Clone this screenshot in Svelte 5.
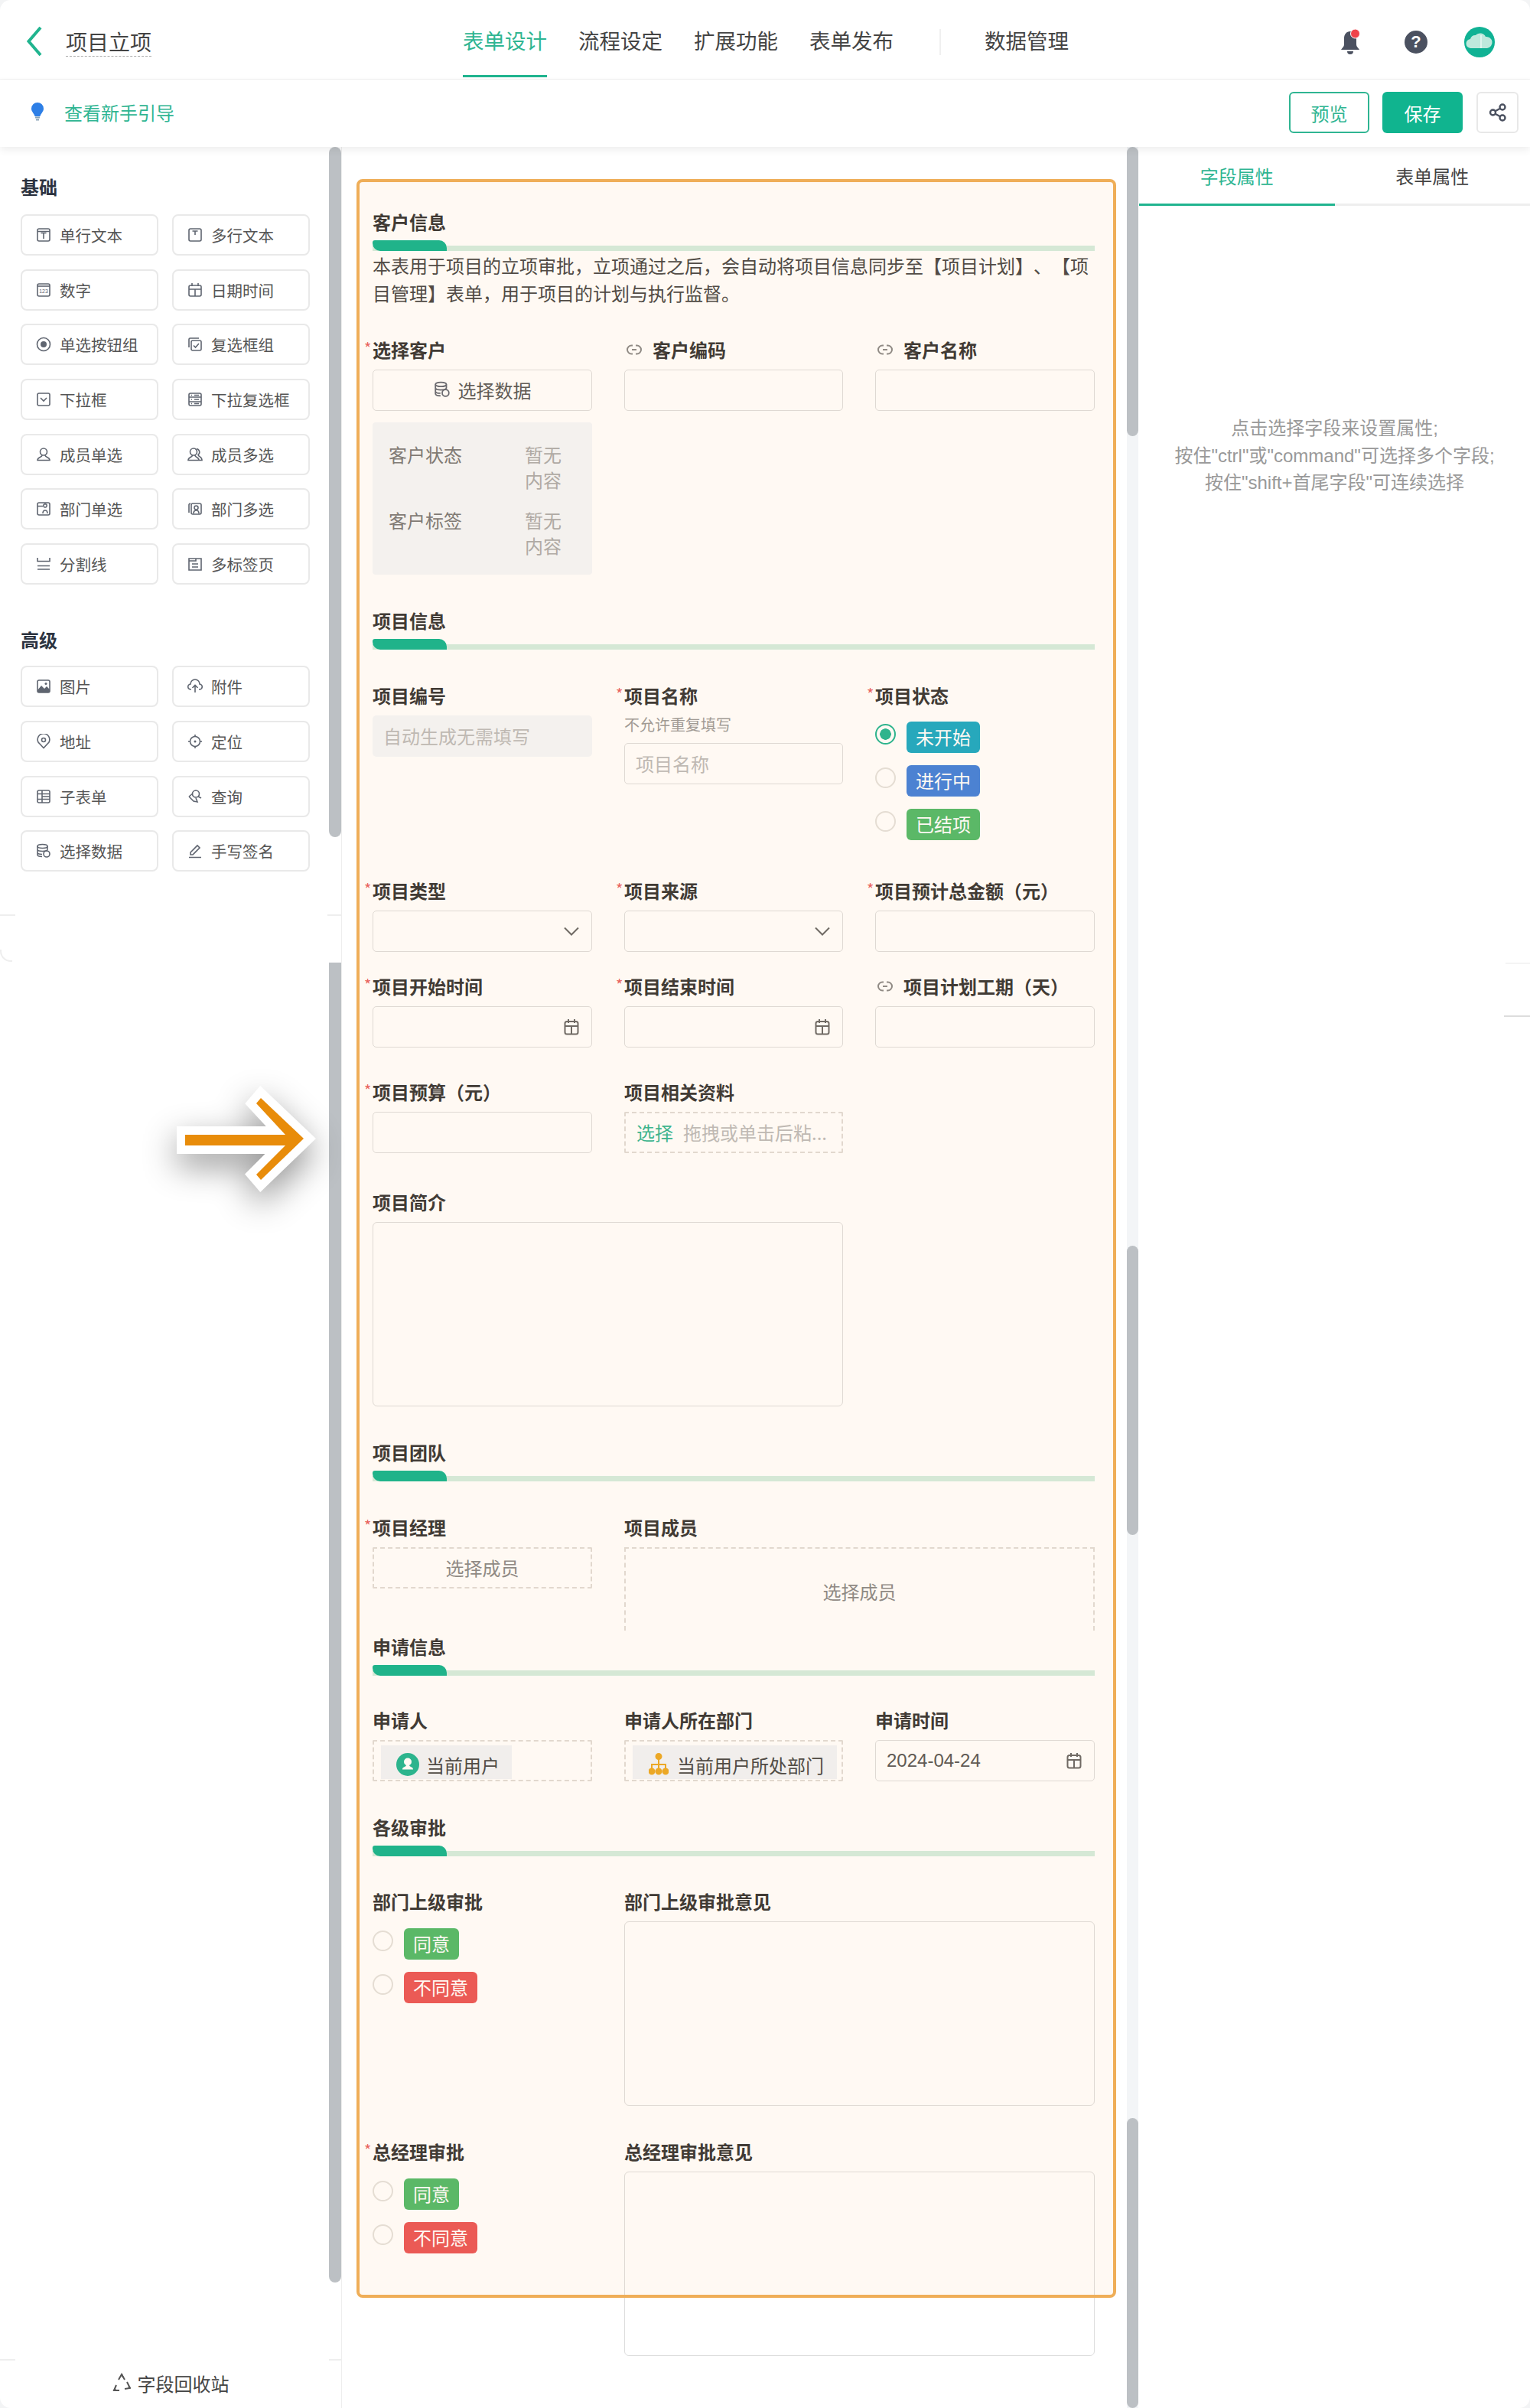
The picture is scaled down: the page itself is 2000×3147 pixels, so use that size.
<script lang="ts">
  // Form designer page: header, widget palette, form canvas, property panel.
  const box = '<rect x="2" y="2" width="16" height="16" rx="2"/>';
  const icons: Record<string, string> = {
    single: box + '<path d="M2 5.500h16M6.500 7.500h7M10 7.500V15"/>',
    multi: box + '<path d="M6.500 5h7M10 5v5"/>',
    number: box + '<path d="M2 5h16"/><text x="10" y="14" font-size="7" font-family="Liberation Sans" text-anchor="middle" fill="#5f6570" stroke="none">123</text>',
    date: '<path d="M6 1v4M14 1v4"/><rect x="2" y="4" width="16" height="14" rx="2"/><path d="M2 9h16M10 9v9"/>',
    radio: '<circle cx="10" cy="10" r="8.500"/><circle cx="10" cy="10" r="4" fill="#5f6570" stroke="none"/>',
    check: '<path d="M2 14V3.500A1.500 1.500 0 0 1 3.500 2H15"/><rect x="5" y="5" width="13" height="13" rx="2"/><path d="M8 11.500l2.500 2.500 4.500-5"/>',
    select: box + '<path d="M6 8l4 4 4-4"/>',
    multiselect: box + '<path d="M2 7h16M2 13h16M9 4.500h6M9 10h6M9 15.500h6M5 4.500h1M5 10h1M5 15.500h1"/>',
    user: '<circle cx="10" cy="6.500" r="4.500"/><path d="M8 11c0 3-6 2-6 6.500h16c0-4.500-6-3.500-6-6.500"/>',
    users: '<circle cx="8" cy="6.500" r="4.500"/><path d="M6.500 11c0 3-5.500 2-5.500 6.500h14c0-4.500-5-3.500-5-6.500M12 2.500a4.500 4.500 0 0 1 2 8c1 3 5 2 5 7h-4"/>',
    dept: box + '<path d="M2 6.500h7M12 8a2.200 2.200 0 1 1 .01 0M9 16c0-3 1-4 3-4s3 1 3 4"/>',
    deptm: '<path d="M2 15V4.500A2 2 0 0 1 4 3"/><rect x="5" y="3" width="13" height="14" rx="2"/><circle cx="11.500" cy="8.500" r="2.500"/><path d="M8 16c0-3 1.500-4 3.500-4s3.500 1 3.500 4"/>',
    divider: '<path d="M2 2v4.500h16V2M2 12.500h16M2 17h16"/>',
    tabs: '<path d="M2 3h16v15H2zM2 6h9V3M6 10h8M6 14h8"/>',
    image: box + '<path d="M2 15l5-6 4 4 3-3 4 4v4H2z" fill="#5f6570" stroke="none"/><circle cx="13" cy="6.500" r="1.500" fill="#5f6570" stroke="none"/>',
    attach: '<path d="M5 14H4.500a3.500 3.500 0 0 1-.5-7 6 6 0 0 1 12 0 3.500 3.500 0 0 1-.5 7H15M10 18V9M6.500 12L10 8.500l3.500 3.500"/>',
    addr: '<path d="M10 18.500L3 11a7.800 7.800 0 1 1 14 0z"/><circle cx="10" cy="8" r="2.500"/>',
    locate: '<circle cx="10" cy="10" r="6.500"/><circle cx="10" cy="10" r="1.500" fill="#5f6570" stroke="none"/><path d="M10 1v2.500M10 16.500V19M1 10h2.500M16.500 10H19"/>',
    subform: box + '<path d="M8 2v16M8 6.500h10M8 10h10M8 13.500h10M2 6.500h6M2 13.500h6"/>',
    query: '<circle cx="11" cy="6.500" r="4.500"/><path d="M2 10l5-4M2 10l6 6 5 1-2-5M14 10l4 2"/>',
    data: '<ellipse cx="8.500" cy="4" rx="6.500" ry="2.500"/><path d="M2 4v11c0 1.500 2.500 2.500 6 2.500M2 8c0 1.500 3 2.500 6.500 2.500s6.500-1 6.500-2.500V4M2 12c0 1.500 2.500 2.500 6 2.500"/><circle cx="14" cy="14" r="4"/>',
    sign: '<path d="M4 12L13 3l3 3-9 9H4zM2 18.500h16"/>',
  };

  const basic = [
    ['single', '单行文本'], ['multi', '多行文本'], ['number', '数字'], ['date', '日期时间'],
    ['radio', '单选按钮组'], ['check', '复选框组'], ['select', '下拉框'], ['multiselect', '下拉复选框'],
    ['user', '成员单选'], ['users', '成员多选'], ['dept', '部门单选'], ['deptm', '部门多选'],
    ['divider', '分割线'], ['tabs', '多标签页'],
  ];
  const advanced = [
    ['image', '图片'], ['attach', '附件'], ['addr', '地址'], ['locate', '定位'],
    ['subform', '子表单'], ['query', '查询'], ['data', '选择数据'], ['sign', '手写签名'],
  ];
  const navs = ['表单设计', '流程设定', '扩展功能', '表单发布'];
</script>

{#snippet widget(item: string[])}
  <div class="widget">
    <svg class="wicon" viewBox="0 0 20 20" width="20" height="20">{@html icons[item[0]]}</svg>
    <span>{item[1]}</span>
  </div>
{/snippet}

{#snippet heading(text: string)}
  <div class="sec-title">{text}</div>
  <div class="sec-bar"><i></i></div>
{/snippet}

{#snippet label(text: string, req = false, link = false)}
  <div class="label">
    {#if req}<span class="req">*</span>{/if}
    {#if link}
      <svg class="link" viewBox="0 0 22 20" width="22" height="20" fill="none" stroke="#888" stroke-width="2">
        <path d="M9 4.500H7.500a5.500 5.500 0 0 0 0 11H9M13 4.500h1.500a5.500 5.500 0 0 1 0 11H13M8 10h6" />
      </svg>
    {/if}
    {text}
  </div>
{/snippet}

{#snippet calendar()}
  <svg class="cal" viewBox="0 0 20 22" width="20" height="22" fill="none" stroke="#666" stroke-width="2">
    <path d="M6 1v5M14 1v5" /><rect x="1.500" y="4" width="17" height="16.500" rx="2.500" /><path d="M1.500 10h17M10 10v10.500" />
  </svg>
{/snippet}

{#snippet chevron()}
  <svg viewBox="0 0 20 12" width="20" height="12" fill="none" stroke="#666" stroke-width="2"><path d="M1 1.500l9 9 9-9" /></svg>
{/snippet}

{#snippet option(text: string, color: string, on = false)}
  <div class="opt">
    <span class="radio" class:on></span>
    <span class="tag {color}">{text}</span>
  </div>
{/snippet}

<div class="app">
  <header class="top">
    <div class="brand">
      <svg viewBox="0 0 22 40" width="22" height="40" fill="none" stroke="#20b48f" stroke-width="4"><path d="M19 2L3.500 20 19 38" /></svg>
      <span class="name">项目立项</span>
    </div>
    <nav class="nav">
      {#each navs as n, i}
        <div class="nav-item" class:active={i === 0}>{n}</div>
      {/each}
      <span class="nav-div"></span>
      <div class="nav-item">数据管理</div>
    </nav>
    <div class="tools">
      <svg class="bell" viewBox="0 0 28 34" width="28" height="34">
        <path d="M14 3c-5 0-8 4-8 9v8c0 3-2 4-4 7h24c-2-3-4-4-4-7v-8c0-5-3-9-8-9zM10 29a4 4 0 0 0 8 0z" fill="#4b5160" />
        <circle cx="20.500" cy="6" r="6" fill="#f0434a" stroke="#fff" stroke-width="1" />
      </svg>
      <div class="help">?</div>
      <svg class="avatar" viewBox="0 0 40 40" width="40" height="40">
        <circle cx="20" cy="20" r="20" fill="#10b294" />
        <path d="M9 28a6 6 0 0 1-1-12 7 7 0 0 1 7-5 8 8 0 0 1 13 2 7.500 7.500 0 0 1 2 15z" fill="#bfe9dc" />
        <path d="M22 11v17" stroke="#dff5ee" stroke-width="2" />
      </svg>
    </div>
  </header>

  <div class="sub">
    <div class="guide">
      <svg viewBox="0 0 18 24" width="18" height="24">
        <path d="M9 0a8 8 0 0 1 8 8c0 4-3.500 6-4.500 10h-7C4.500 14 1 12 1 8a8 8 0 0 1 8-8z" fill="#2e7fe6" />
        <path d="M6 19.500h6M7 22.500h4" stroke="#8aa4b8" stroke-width="2" />
      </svg>
      <span>查看新手引导</span>
    </div>
    <div class="actions">
      <button class="btn ghost">预览</button>
      <button class="btn solid">保存</button>
      <button class="btn share" aria-label="分享">
        <svg viewBox="0 0 24 24" width="24" height="24" fill="none" stroke="#4b5160" stroke-width="2.400">
          <circle cx="5.500" cy="12" r="3.500" /><circle cx="18" cy="5" r="3.500" /><circle cx="18" cy="19" r="3.500" />
          <path d="M8.500 10.300l6.500-3.600M8.500 13.700l6.500 3.600" />
        </svg>
      </button>
    </div>
  </div>

  <main class="main">
    <aside class="palette">
      <i class="thumb-l first"></i>
      <i class="thumb-l second"></i>
      <h3 class="group first">基础</h3>
      <div class="widgets">
        {#each basic as item}{@render widget(item)}{/each}
      </div>
      <h3 class="group">高级</h3>
      <div class="widgets">
        {#each advanced as item}{@render widget(item)}{/each}
      </div>
      <div class="recycle">
        <svg viewBox="0 0 24 28" width="24" height="28" fill="none" stroke="#555" stroke-width="2">
          <path d="M8 10l4-7 4 7M19 13l4 8-7 1M9 24H2l3-7" />
          <path d="M14 7l-2-4M21 19l2 2M4 22l-2 2" />
        </svg>
        <span>字段回收站</span>
      </div>
    </aside>

    <section class="canvas">
      <div class="track"><i class="t1"></i><i class="t2"></i><i class="t3"></i></div>

      <div class="sec first">
        {@render heading('客户信息')}
        <p class="desc">本表用于项目的立项审批，立项通过之后，会自动将项目信息同步至【项目计划】、【项目管理】表单，用于项目的计划与执行监督。</p>
      </div>
      <div class="row r39">
        <div>
          {@render label('选择客户', true)}
          <div class="input pick">
            <svg class="wicon" viewBox="0 0 20 20" width="22" height="22">{@html icons.data}</svg>
            <span>选择数据</span>
          </div>
          <div class="info">
            <span>客户状态</span><em>暂无内容</em>
            <span>客户标签</span><em>暂无内容</em>
          </div>
        </div>
        <div>{@render label('客户编码', false, true)}<div class="input"></div></div>
        <div>{@render label('客户名称', false, true)}<div class="input"></div></div>
      </div>

      <div class="sec">{@render heading('项目信息')}</div>
      <div class="row r44">
        <div>
          {@render label('项目编号')}
          <div class="input auto">自动生成无需填写</div>
        </div>
        <div>
          {@render label('项目名称', true)}
          <div class="hint">不允许重复填写</div>
          <div class="input ph">项目名称</div>
        </div>
        <div>
          {@render label('项目状态', true)}
          <div class="opts status">
            {@render option('未开始', 'cyan', true)}
            {@render option('进行中', 'blue')}
            {@render option('已结项', 'green')}
          </div>
        </div>
      </div>

      <div class="row r50">
        <div>{@render label('项目类型', true)}<div class="input end">{@render chevron()}</div></div>
        <div>{@render label('项目来源', true)}<div class="input end">{@render chevron()}</div></div>
        <div>{@render label('项目预计总金额（元）', true)}<div class="input"></div></div>
      </div>

      <div class="row r29">
        <div>{@render label('项目开始时间', true)}<div class="input end">{@render calendar()}</div></div>
        <div>{@render label('项目结束时间', true)}<div class="input end">{@render calendar()}</div></div>
        <div>{@render label('项目计划工期（天）', false, true)}<div class="input"></div></div>
      </div>

      <div class="row r42">
        <div>{@render label('项目预算（元）', true)}<div class="input"></div></div>
        <div>
          {@render label('项目相关资料')}
          <div class="input dashed upload"><b>选择</b><span>拖拽或单击后粘...</span></div>
        </div>
      </div>

      <div class="row r48">
        <div class="span2">{@render label('项目简介')}<div class="area"></div></div>
      </div>

      <div class="sec">{@render heading('项目团队')}</div>
      <div class="row r44">
        <div>{@render label('项目经理', true)}<div class="input dashed center">选择成员</div></div>
        <div class="span2">{@render label('项目成员')}<div class="members">选择成员</div></div>
      </div>

      <div class="sec tight">{@render heading('申请信息')}</div>
      <div class="row r42">
        <div>
          {@render label('申请人')}
          <div class="input dashed holder">
            <div class="chip user">
              <svg viewBox="0 0 30 30" width="30" height="30">
                <circle cx="15" cy="15" r="15" fill="#1cb592" />
                <circle cx="15" cy="11.500" r="5" fill="#fff" />
                <path d="M13 15.500c0 3-5 2-5 6h14c0-4-5-3-5-6z" fill="#fff" />
              </svg>
              <span>当前用户</span>
            </div>
          </div>
        </div>
        <div>
          {@render label('申请人所在部门')}
          <div class="input dashed holder">
            <div class="chip org">
              <svg viewBox="0 0 26 30" width="26" height="30" fill="none" stroke="#eba823" stroke-width="2">
                <circle cx="13" cy="4.500" r="3.500" fill="#eba823" />
                <path d="M13 7v13M4 21v-6h18v6" />
                <circle cx="4" cy="24" r="3.500" fill="#eba823" /><circle cx="13" cy="24" r="3.500" fill="#eba823" /><circle cx="22" cy="24" r="3.500" fill="#eba823" />
              </svg>
              <span>当前用户所处部门</span>
            </div>
          </div>
        </div>
        <div>
          {@render label('申请时间')}
          <div class="input end between"><span class="date">2024-04-24</span>{@render calendar()}</div>
        </div>
      </div>

      <div class="sec">{@render heading('各级审批')}</div>
      <div class="row r43">
        <div>
          {@render label('部门上级审批')}
          <div class="opts approve">
            {@render option('同意', 'green')}
            {@render option('不同意', 'red')}
          </div>
        </div>
        <div class="span2">{@render label('部门上级审批意见')}<div class="area"></div></div>
      </div>

      <div class="row r44">
        <div>
          {@render label('总经理审批', true)}
          <div class="opts approve">
            {@render option('同意', 'green')}
            {@render option('不同意', 'red')}
          </div>
        </div>
        <div class="span2">{@render label('总经理审批意见')}<div class="area"></div></div>
      </div>
    </section>

    <aside class="props">
      <div class="prop-tabs">
        <div class="prop-tab active">字段属性</div>
        <div class="prop-tab">表单属性</div>
      </div>
      <p class="prop-tip">点击选择字段来设置属性;<br />按住"ctrl"或"command"可选择多个字段;<br />按住"shift+首尾字段"可连续选择</p>
    </aside>
  </main>

  <!-- highlight frame over the form -->
  <div class="frame"></div>

  <!-- callout arrow -->
  <svg class="arrow" viewBox="200 1400 230 210" width="230" height="210">
    <path class="arrow-edge" d="M242 1483H373L335 1442L341 1435L397 1488L341 1542L335 1535L373 1497H242Z" />
    <path fill="#e88c0a" d="M242 1483H373L335 1442L341 1435L397 1488L341 1542L335 1535L373 1497H242Z" />
  </svg>

  <!-- capture seams left by the stitched long screenshot -->
  <i class="seam a"></i><i class="seam b"></i><i class="seam c"></i><i class="seam d"></i>
  <i class="seam e"></i><i class="seam f"></i><i class="seam g"></i>
</div>

<style>
  :global(body) {
    margin: 0;
    background: #f3f4f5;
  }
  * {
    box-sizing: border-box;
  }
  .app {
    position: relative;
    width: 2000px;
    height: 3147px;
    overflow: hidden;
    background: #fff;
    border-radius: 14px;
    font-family: 'Noto Sans CJK SC', 'Liberation Sans', sans-serif;
    font-size: 24px;
    color: #444;
  }

  /* header */
  .top {
    display: flex;
    height: 104px;
    border-bottom: 1px solid #f1f1f1;
  }
  .brand {
    display: flex;
    align-items: center;
    gap: 30px;
    width: 605px;
    padding: 4px 0 0 34px;
  }
  .name {
    font-size: 28px;
    line-height: 38px;
    border-bottom: 1px dashed #aaa;
    margin-top: 2px;
    color: #444;
  }
  .nav {
    display: flex;
    gap: 41px;
  }
  .nav-item {
    height: 101px;
    padding-top: 8px;
    line-height: 88px;
    font-size: 27.5px;
    color: #444;
    border-bottom: 3px solid transparent;
  }
  .nav-item.active {
    color: #2fb592;
    border-bottom-color: #20b48f;
  }
  .nav-div {
    width: 2px;
    height: 34px;
    margin: 38px 16px 0 19px;
    background: #f0f0f0;
  }
  .tools {
    display: flex;
    align-items: center;
    margin-left: auto;
    padding: 6px 46px 0 0;
  }
  .help {
    width: 30px;
    height: 30px;
    margin: 0 48px 0 57px;
    border-radius: 50%;
    background: #4b5160;
    color: #fff;
    font: 700 22px/30px 'Liberation Sans', sans-serif;
    text-align: center;
  }
  .sub {
    position: relative;
    z-index: 2;
    display: flex;
    justify-content: space-between;
    height: 88px;
    background: #fff;
    box-shadow: 0 4px 10px rgba(0, 0, 0, 0.07);
  }
  .guide {
    display: flex;
    align-items: center;
    gap: 26px;
    height: 84px;
    padding-left: 40px;
    color: #2fb592;
  }
  .actions {
    display: flex;
    gap: 17px;
    padding: 16px 15px 0 0;
  }
  .btn {
    width: 105px;
    height: 54px;
    border-radius: 6px;
    font: 24px 'Noto Sans CJK SC', sans-serif;
    padding: 0;
  }
  .ghost {
    border: 2px solid #2fb592;
    background: #fff;
    color: #2fb592;
  }
  .solid {
    border: 0;
    background: #10b48f;
    color: #fff;
  }
  .share {
    width: 55px;
    margin-left: 1px;
    border: 2px solid #e8e8e8;
    background: #fff;
    display: flex;
    align-items: center;
    justify-content: center;
  }

  /* layout */
  .main {
    display: flex;
    height: 2955px;
  }

  /* widget palette */
  .palette {
    position: relative;
    display: flex;
    flex-direction: column;
    width: 447px;
    padding-left: 27px;
    border-right: 1px solid #eee;
  }
  .thumb-l {
    position: absolute;
    left: 430px;
    width: 16px;
    background: #bcc0c4;
  }
  .thumb-l.first {
    top: 0;
    height: 902px;
    border-radius: 8px;
  }
  .thumb-l.second {
    top: 1066px;
    height: 1725px;
    border-radius: 0 0 8px 8px;
  }
  .group {
    margin: 56px 0 18px;
    font-size: 24px;
    line-height: 32px;
    font-weight: 700;
    color: #2c3340;
  }
  .group.first {
    margin-top: 36px;
    margin-bottom: 20px;
  }
  .widgets {
    display: grid;
    grid-template-columns: 180px 180px;
    column-gap: 18px;
    row-gap: 17.7px;
    width: 378px;
  }
  .widget {
    display: flex;
    align-items: center;
    gap: 11px;
    height: 54px;
    padding-left: 18px;
    border: 2px solid #e9e9e9;
    border-radius: 8px;
    font-size: 20.500px;
    color: #555;
  }
  .wicon {
    flex: none;
    fill: none;
    stroke: #5f6570;
    stroke-width: 1.600;
  }
  .recycle {
    display: flex;
    align-items: center;
    justify-content: center;
    gap: 9px;
    height: 64px;
    margin: auto 0 0 -27px;
    padding-bottom: 2px;
    color: #444;
  }

  /* form canvas */
  .canvas {
    position: relative;
    width: 1041px;
    padding: 0 57px 0 40px;
  }
  .track {
    position: absolute;
    top: 0;
    right: 0;
    bottom: 0;
    width: 15px;
    background: #f3f5f7;
  }
  .track i {
    position: absolute;
    left: 0;
    width: 15px;
    background: #bcc0c4;
    border-radius: 8px;
  }
  .t1 {
    top: 0;
    height: 378px;
  }
  .t2 {
    top: 1436px;
    height: 378px;
  }
  .t3 {
    top: 2576px;
    height: 379px;
  }
  .sec {
    margin-top: 44px;
  }
  .sec.first {
    margin-top: 82px;
  }
  .sec.tight {
    margin-top: 5px;
  }
  .sec-title {
    height: 34px;
    font-size: 24px;
    line-height: 32px;
    font-weight: 700;
    color: #333;
  }
  .sec-bar {
    position: relative;
    height: 14px;
    margin-top: 6px;
  }
  .sec-bar::before {
    content: '';
    position: absolute;
    left: 0;
    right: 0;
    bottom: 0;
    height: 7px;
    background: #d2eddf;
  }
  .sec-bar i {
    position: absolute;
    left: 0;
    top: 0;
    bottom: 0;
    width: 97px;
    background: #10b48f;
    border-radius: 3px 10px 0 10px;
  }
  .desc {
    height: 72px;
    margin: 1px 0 1px;
    line-height: 36px;
    color: #444;
    text-spacing-trim: space-all;
  }
  .row {
    display: grid;
    grid-template-columns: 287px 286px 287px;
    column-gap: 42px;
    align-items: start;
  }
  .r29 { margin-top: 29px; }
  .r39 { margin-top: 40px; }
  .r42 { margin-top: 42px; }
  .r43 { margin-top: 43px; }
  .r44 { margin-top: 44px; }
  .r48 { margin-top: 48px; }
  .r50 { margin-top: 50px; }
  .span2 {
    grid-column: span 2;
  }
  .label {
    display: flex;
    align-items: center;
    height: 34px;
    padding-bottom: 3px;
    margin-bottom: 8px;
    font-weight: 700;
    line-height: 31px;
    color: #333;
    white-space: nowrap;
  }
  .req {
    width: 11px;
    margin-left: -11px;
    height: 31px;
    font-size: 20px;
    line-height: 28px;
    font-weight: 400;
    color: #e8605f;
  }
  .link {
    flex: none;
    margin: 0 13px 0 2px;
  }
  .input {
    display: flex;
    align-items: center;
    height: 54px;
    padding: 0 14px 2px;
    border: 1.5px solid #ddd;
    border-radius: 5px;
    color: #bbb;
  }
  .end {
    justify-content: flex-end;
    padding: 0 16px 0 14px;
  }
  .between {
    justify-content: space-between;
  }
  .date {
    font-family: 'Liberation Sans', sans-serif;
    color: #555;
  }
  .pick {
    justify-content: center;
    gap: 10px;
    color: #555;
  }
  .auto {
    border: 0;
    background: #f4f7fa;
  }
  .hint {
    height: 26px;
    margin: -1px 0 11px;
    font-size: 20px;
    line-height: 26px;
    color: #999;
  }
  .dashed {
    border: 2px dashed #e0dcd8;
    border-radius: 2px;
  }
  .center {
    justify-content: center;
    color: #888;
  }
  .upload {
    gap: 13px;
  }
  .upload b {
    font-weight: 400;
    color: #2fb592;
  }
  .info {
    display: grid;
    grid-template-columns: 178px 48px;
    align-content: start;
    row-gap: 20px;
    height: 199px;
    margin-top: 15px;
    padding: 25px 0 0 21px;
    background: #f4f7fa;
    border-radius: 4px;
    line-height: 33px;
    color: #777;
  }
  .info em {
    font-style: normal;
    color: #aaa;
  }
  .opts {
    display: flex;
    flex-direction: column;
    gap: 16px;
  }
  .opts.status {
    margin-top: 16px;
  }
  .opts.approve {
    margin-top: 17px;
  }
  .opt {
    display: flex;
    align-items: flex-start;
    gap: 14px;
  }
  .radio {
    flex: none;
    width: 27px;
    height: 27px;
    margin-top: 3px;
    border: 2px solid #e3e1dd;
    border-radius: 50%;
  }
  .radio.on {
    border: 2px solid #1fb592;
    background: radial-gradient(circle, #1fb592 0 7px, transparent 7.500px);
  }
  .tag {
    height: 41px;
    padding: 0 12px;
    border-radius: 6px;
    line-height: 39px;
    color: #fff;
  }
  .cyan { background: #17a8c4; }
  .blue { background: #3f7fdc; }
  .green { background: #4fba69; }
  .red { background: #ea5455; }
  .area {
    height: 241px;
    border: 1.5px solid #ddd;
    border-radius: 6px;
  }
  .members {
    height: 109px;
    padding-top: 22px;
    border: 2px dashed #e0dcd8;
    border-bottom: 0;
    text-align: center;
    line-height: 68px;
    color: #888;
  }
  .holder {
    align-items: flex-start;
    padding: 5px 0 0 9px;
  }
  .chip {
    display: flex;
    align-items: center;
    height: 44px;
    padding-top: 6px;
    background: #f0f4f8;
    color: #444;
  }
  .chip.user {
    gap: 9px;
    padding-left: 20px;
    padding-right: 16px;
  }
  .chip.org {
    gap: 11px;
    padding-left: 21px;
    padding-right: 17px;
  }

  /* property panel */
  .props {
    width: 512px;
    padding-left: 1px;
  }
  .prop-tabs {
    display: flex;
    height: 77px;
    border-bottom: 3px solid #eee;
  }
  .prop-tab {
    width: 256px;
    height: 77px;
    line-height: 76px;
    text-align: center;
    border-bottom: 3px solid transparent;
    color: #444;
  }
  .prop-tab.active {
    color: #2fb592;
    border-bottom-color: #20b48f;
  }
  .prop-tip {
    margin: 273px 0 0;
    line-height: 35.500px;
    text-align: center;
    font-family: 'Liberation Sans', 'Noto Sans CJK SC', sans-serif;
    color: #999;
  }

  /* overlays */
  .frame {
    position: absolute;
    left: 466px;
    top: 234px;
    width: 993px;
    height: 2769px;
    border: 4px solid #efae58;
    border-radius: 8px;
    background: rgba(255, 170, 80, 0.07);
    pointer-events: none;
  }
  .arrow {
    position: absolute;
    left: 200px;
    top: 1400px;
    filter: drop-shadow(0 16px 22px rgba(0, 0, 0, 0.42));
  }
  .arrow-edge {
    fill: #fff;
    stroke: #fff;
    stroke-width: 22;
    stroke-linejoin: miter;
  }
  .seam {
    position: absolute;
    height: 2px;
    background: #eee;
  }
  .seam.a { left: 0; top: 1195px; width: 20px; }
  .seam.b { left: 428px; top: 1195px; width: 18px; }
  .seam.c { left: 0; top: 3083px; width: 20px; }
  .seam.d { left: 430px; top: 3083px; width: 16px; }
  .seam.e { left: 1966px; top: 1327px; width: 34px; background: #ddd; }
  .seam.f { left: 1968px; top: 1258px; width: 32px; background: #f4f4f4; }
  .seam.g {
    left: 0;
    top: 1241px;
    width: 16px;
    height: 16px;
    background: transparent;
    border-left: 2px solid #eee;
    border-bottom: 2px solid #eee;
    border-bottom-left-radius: 14px;
  }
</style>
